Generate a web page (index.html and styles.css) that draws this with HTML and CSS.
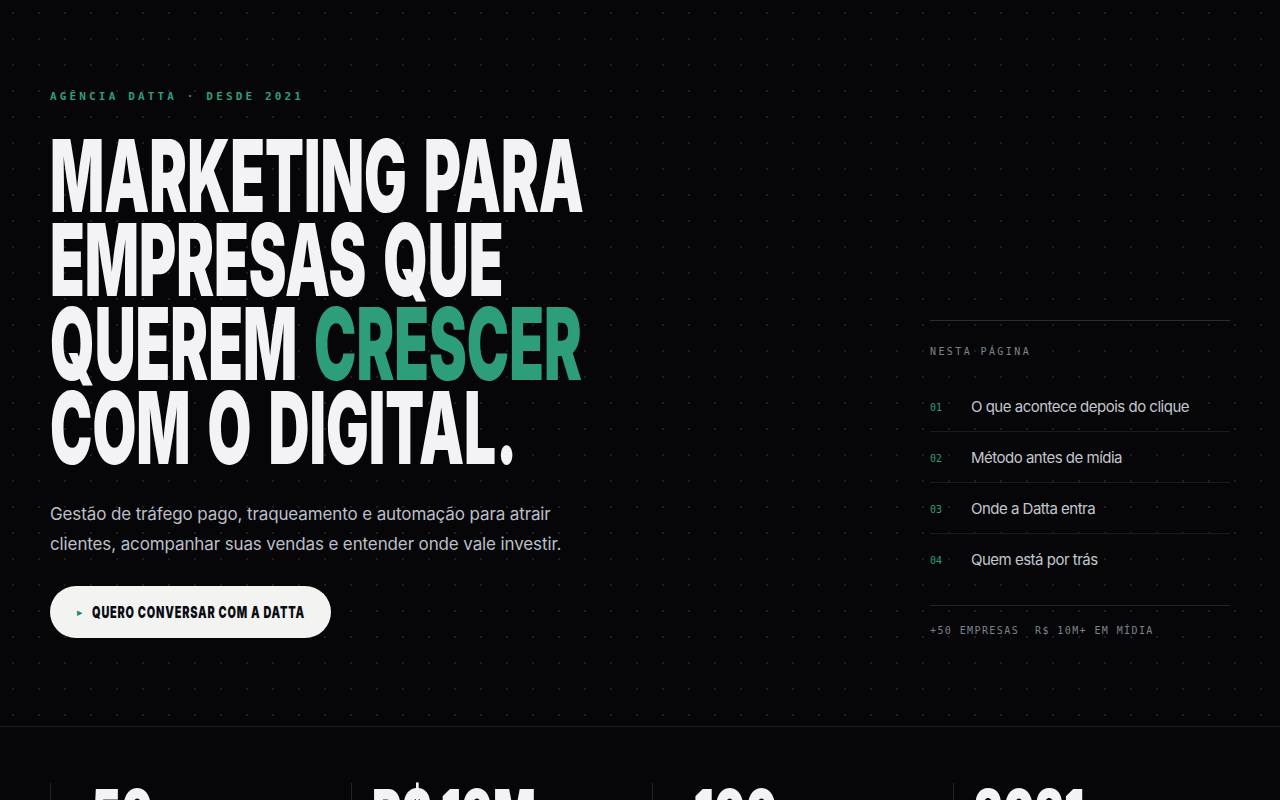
FILE: index.html
```html
<!DOCTYPE html>
<html lang="pt-BR">
<head>
<meta charset="utf-8">
<title>Datta — Marketing para empresas que querem crescer</title>
<link rel="stylesheet" href="styles.css">
</head>
<body>
<section class="hero">
  <div class="hero-main">
    <p class="eyebrow">AGÊNCIA DATTA · DESDE 2021</p>
    <h1 class="headline">
      <span class="line">MARKETING PARA</span>
      <span class="line">EMPRESAS QUE</span>
      <span class="line">QUEREM <em class="accent">CRESCER</em></span>
      <span class="line">COM O DIGITAL.</span>
    </h1>
    <p class="lead">Gestão de tráfego pago, traqueamento e automação para atrair clientes, acompanhar suas vendas e entender onde vale investir.</p>
    <a class="cta" href="#contato"><span class="cta-arrow">&#9656;</span><span class="cta-label">QUERO CONVERSAR COM A DATTA</span></a>
  </div>
  <aside class="toc">
    <p class="toc-title">NESTA PÁGINA</p>
    <ol class="toc-list">
      <li class="toc-item"><span class="toc-num">01</span><span class="toc-text">O que acontece depois do clique</span></li>
      <li class="toc-item"><span class="toc-num">02</span><span class="toc-text">Método antes de mídia</span></li>
      <li class="toc-item"><span class="toc-num">03</span><span class="toc-text">Onde a Datta entra</span></li>
      <li class="toc-item"><span class="toc-num">04</span><span class="toc-text">Quem está por trás</span></li>
    </ol>
    <p class="toc-foot"><span>+50 EMPRESAS</span><span>R$ 10M+ EM MÍDIA</span></p>
  </aside>
</section>
<section class="stats">
  <div class="stat"><span class="stat-num"><span class="plus">+</span>50</span></div>
  <div class="stat"><span class="stat-num">R$ 10M</span></div>
  <div class="stat"><span class="stat-num"><span class="plus">+</span>100</span></div>
  <div class="stat"><span class="stat-num">2021</span></div>
</section>
</body>
</html>
```
FILE: styles.css
```css
* { box-sizing: border-box; }
html, body { margin: 0; padding: 0; }
body {
  background: #060609;
  color: #f3f3f5;
  font-family: "Inter", "Noto Sans", "Liberation Sans", sans-serif;
  overflow: hidden;
}

.hero {
  height: 726px;
  padding: 90px 50px 88px;
  display: grid;
  grid-template-columns: minmax(0, 1fr) 300px;
  align-items: end;
  background-color: #060609;
  background-image: radial-gradient(circle at center, #1d1d22 0, #1d1d22 1px, transparent 1.4px);
  background-size: 26px 26px;
  background-position: 0 0;
}

.hero-main { align-self: start; min-width: 0; }

.eyebrow {
  margin: 0 0 30px;
  font-family: "DejaVu Sans Mono", "Liberation Mono", monospace;
  font-size: 11px;
  line-height: 14px;
  font-weight: 700;
  letter-spacing: 3.15px;
  color: #2e9e7a;
}

.headline {
  margin: 0 0 29px;
  font-family: "Inter", "Roboto", sans-serif;
  font-weight: 900;
  font-size: 100px;
  line-height: 84px;
  letter-spacing: 0;
  word-spacing: 10px;
  color: #f3f3f5;
}
.headline .line {
  display: block;
  white-space: nowrap;
  transform: scaleX(0.567);
  transform-origin: left center;
}
.accent { font-style: normal; color: #2e9e7a; }

.lead {
  margin: 0 0 27px;
  max-width: 515px;
  font-size: 17px;
  line-height: 30px;
  color: #bcbfc7;
  letter-spacing: -0.12px;
}

.cta {
  display: flex;
  align-items: center;
  width: 281px;
  height: 52px;
  padding: 0 0 0 27px;
  border-radius: 26px;
  background: #f3f3f1;
  color: #0b0d14;
  text-decoration: none;
  white-space: nowrap;
}
.cta-arrow {
  color: #1f8a6c;
  font-size: 11px;
  width: 15px;
  flex: none;
}
.cta-label {
  display: inline-block;
  font-family: "Inter", sans-serif;
  font-weight: 900;
  font-size: 16px;
  letter-spacing: 1.2px;
  transform: scaleX(0.68);
  transform-origin: left center;
}

.toc {
  border-top: 1px solid #2c2c32;
  padding-top: 24px;
}
.toc-title {
  margin: 0 0 22px;
  font-family: "DejaVu Sans Mono", "Liberation Mono", monospace;
  font-size: 10px;
  line-height: 14px;
  letter-spacing: 2.4px;
  color: #7d828b;
}
.toc-list { list-style: none; margin: 0; padding: 0; }
.toc-item {
  display: flex;
  align-items: center;
  height: 51px;
  border-bottom: 1px solid #1b1b20;
}
.toc-item:last-child { border-bottom: 0; }
.toc-num {
  width: 41px;
  flex: none;
  font-family: "DejaVu Sans Mono", "Liberation Mono", monospace;
  font-size: 10px;
  color: #2e9e7a;
  padding-top: 2px;
}
.toc-text {
  font-size: 15px;
  color: #c3c6cd;
  letter-spacing: -0.5px;
}
.toc-foot {
  margin: 20px 0 0;
  padding-top: 18px;
  border-top: 1px solid #232328;
  display: flex;
  gap: 16px;
  font-family: "DejaVu Sans Mono", "Liberation Mono", monospace;
  font-size: 10px;
  line-height: 14px;
  letter-spacing: 1.4px;
  color: #7d828b;
}

.stats {
  border-top: 1px solid #1c1c21;
  padding: 56px 50px 56px;
  display: grid;
  grid-template-columns: repeat(4, minmax(0, 1fr));
  gap: 24px;
}
.stat {
  border-left: 1px solid #222228;
  padding-left: 20px;
  height: 90px;
}
.stat-num {
  display: inline-block;
  font-family: "Inter", sans-serif;
  font-weight: 900;
  font-size: 66px;
  line-height: 60px;
  color: #f3f3f5;
  white-space: nowrap;
  transform: scaleX(0.68);
  transform-origin: left center;
}
.plus {
  color: #2e9e7a;
  font-size: 36px;
  vertical-align: -30px;
  margin-right: 5px;
}
```
